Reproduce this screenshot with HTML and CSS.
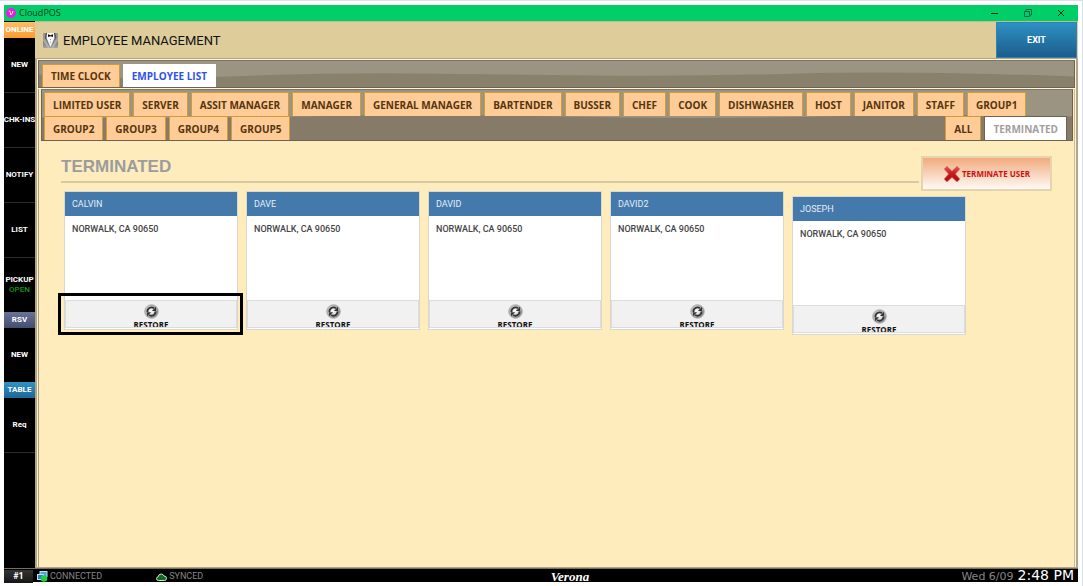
FILE: index.html
```html
<!DOCTYPE html>
<html lang="en">
<head>
  <meta charset="UTF-8">
  <meta name="viewport" content="width=device-width, initial-scale=1.0">
  <title>CloudPOS</title>
  <link rel="stylesheet" href="styles.css">
</head>
<body>
<svg width="0" height="0" class="defs">
  <defs>
    <radialGradient id="metal" cx="45%" cy="45%">
      <stop offset="0" stop-color="#ffffff"/>
      <stop offset="0.5" stop-color="#dddddd"/>
      <stop offset="1" stop-color="#8c8c8c"/>
    </radialGradient>
    <linearGradient id="cross" x1="0" y1="0" x2="0" y2="1">
      <stop offset="0" stop-color="#e85a5a"/>
      <stop offset="0.5" stop-color="#c41a1a"/>
      <stop offset="1" stop-color="#b80c0c"/>
    </linearGradient>
    <linearGradient id="suit" x1="0" y1="0" x2="0" y2="1">
      <stop offset="0" stop-color="#3c3c3c"/>
      <stop offset="1" stop-color="#a4a4a4"/>
    </linearGradient>
    <symbol id="restore" viewBox="0 0 16 16">
      <circle cx="8" cy="8" r="7.3" fill="url(#metal)" stroke="#b4b4b4"/>
      <path d="M3.7 8.6A4.3 4.3 0 0 1 10.6 4.6" fill="none" stroke="#333" stroke-width="2"/>
      <path d="M12.8 3V7.4H8.4Z" fill="#333"/>
      <path d="M12.3 7.9A4.3 4.3 0 0 1 5.4 11.6" fill="none" stroke="#333" stroke-width="2"/>
      <path d="M3.2 13V8.8H7.6Z" fill="#333"/>
    </symbol>
  </defs>
</svg>

<div class="window">
  <header class="titlebar">
    <svg class="app-icon" viewBox="0 0 10 10">
      <circle cx="5" cy="5" r="5" fill="#f01ae0"/>
      <path d="M2.8 3Q4 2.4 4.4 4.6L4.7 7Q6.6 5.5 7 3" fill="none" stroke="#fff" stroke-width="0.9"/>
    </svg>
    <span class="app-name">CloudPOS</span>
    <button class="win-btn" aria-label="Minimize"><svg viewBox="0 0 8 8"><path d="M0 4.5H7" stroke="#021" stroke-width="1"/></svg></button>
    <button class="win-btn" aria-label="Restore down"><svg viewBox="0 0 8 8"><path d="M0.5 2.5H5.5V7.5H0.5ZM2 1.5V0.5H7.5V6H6" fill="none" stroke="#064"/></svg></button>
    <button class="win-btn" aria-label="Close"><svg viewBox="0 0 8 8"><path d="M1 1L7 7M7 1L1 7" stroke="#021" stroke-width="0.9"/></svg></button>
  </header>

  <div class="content">
    <nav class="sidebar">
      <button class="side-label online">ONLINE</button>
      <button class="side-btn">NEW</button>
      <button class="side-btn">CHK-INS</button>
      <button class="side-btn">NOTIFY</button>
      <button class="side-btn">LIST</button>
      <button class="side-btn pickup">PICKUP<span class="open">OPEN</span></button>
      <button class="side-label rsv">RSV</button>
      <button class="side-btn last">NEW</button>
      <button class="side-label table">TABLE</button>
      <button class="side-btn">Req</button>
    </nav>

    <main class="main">
      <div class="page-header">
        <svg class="suit-icon" viewBox="0 0 15 15">
          <rect width="15" height="15" rx="1" fill="url(#suit)"/>
          <path d="M0 0H3L1.5 5 3 7 6.5 15H5L0 8Z" fill="#c9c9c9" opacity="0.6"/>
          <path d="M15 0H12L13.5 5 12 7 8.5 15H10L15 8Z" fill="#c9c9c9" opacity="0.6"/>
          <path d="M4 0H11L11.5 5 7.5 14 3.5 5Z" fill="#f7f7f7"/>
          <path d="M5 1.2L7.5 2.2 10 1.2V4L7.5 3.2 5 4Z" fill="#111"/>
          <circle cx="7.5" cy="6.5" r="0.5" fill="#777"/>
          <circle cx="7.5" cy="9" r="0.5" fill="#777"/>
        </svg>
        <h1>EMPLOYEE MANAGEMENT</h1>
        <button class="exit-btn">EXIT</button>
      </div>

      <div class="frame">
        <div class="tabbar">
          <svg class="wave" viewBox="0 0 1036 27" preserveAspectRatio="none"><path d="M0 14Q90 20 190 16T380 13T560 15T760 13T1036 16V27H0Z" fill="#8a816d"/></svg>
          <button class="tab">TIME CLOCK</button>
          <button class="tab active">EMPLOYEE LIST</button>
        </div>

        <div class="panel">
          <div class="tabbar groups">
            <svg class="wave" viewBox="0 0 1030 51" preserveAspectRatio="none"><path d="M0 28Q130 30 260 27T520 27T780 27T1030 27V51H0Z" fill="#867b69"/></svg>
            <button class="tab">LIMITED USER</button>
            <button class="tab">SERVER</button>
            <button class="tab">ASSIT MANAGER</button>
            <button class="tab">MANAGER</button>
            <button class="tab">GENERAL MANAGER</button>
            <button class="tab">BARTENDER</button>
            <button class="tab">BUSSER</button>
            <button class="tab">CHEF</button>
            <button class="tab">COOK</button>
            <button class="tab">DISHWASHER</button>
            <button class="tab">HOST</button>
            <button class="tab">JANITOR</button>
            <button class="tab">STAFF</button>
            <button class="tab">GROUP1</button>
            <button class="tab">GROUP2</button>
            <button class="tab">GROUP3</button>
            <button class="tab">GROUP4</button>
            <button class="tab">GROUP5</button>
            <button class="tab all">ALL</button>
            <button class="tab selected">TERMINATED</button>
          </div>

          <div class="section-head">
            <h2>TERMINATED</h2>
            <button class="terminate-btn">
              <svg viewBox="0 0 18 18"><path d="M4 1L9 6 14 1 17 4 12.5 9 17 14 14 17 9 12.5 4 17 1 14 5.5 9 1 4Z" fill="url(#cross)" stroke="#d88" stroke-width="0.5"/></svg>
              <span>TERMINATE USER</span>
            </button>
          </div>

          <div class="cards">
            <article class="card">
              <h3>CALVIN</h3>
              <p>NORWALK, CA 90650</p>
              <div class="card-foot highlight">
                <button class="restore-btn"><svg><use href="#restore"/></svg>RESTORE</button>
              </div>
            </article>
            <article class="card">
              <h3>DAVE</h3>
              <p>NORWALK, CA 90650</p>
              <div class="card-foot">
                <button class="restore-btn"><svg><use href="#restore"/></svg>RESTORE</button>
              </div>
            </article>
            <article class="card">
              <h3>DAVID</h3>
              <p>NORWALK, CA 90650</p>
              <div class="card-foot">
                <button class="restore-btn"><svg><use href="#restore"/></svg>RESTORE</button>
              </div>
            </article>
            <article class="card">
              <h3>DAVID2</h3>
              <p>NORWALK, CA 90650</p>
              <div class="card-foot">
                <button class="restore-btn"><svg><use href="#restore"/></svg>RESTORE</button>
              </div>
            </article>
            <article class="card lowered">
              <h3>JOSEPH</h3>
              <p>NORWALK, CA 90650</p>
              <div class="card-foot">
                <button class="restore-btn"><svg><use href="#restore"/></svg>RESTORE</button>
              </div>
            </article>
          </div>
        </div>
      </div>
    </main>
  </div>

  <footer class="statusbar">
    <div class="status-left">
      <span class="station">#1</span>
      <span class="status connected">
        <svg viewBox="0 0 11 11"><rect x="3" y="0.5" width="7" height="5" fill="#4aa3e8" stroke="#cde"/><rect x="0.5" y="3.5" width="6" height="5" fill="#2c7fd0" stroke="#cde"/><circle cx="7" cy="7.5" r="3.3" fill="#12d83c"/></svg>
        CONNECTED
      </span>
      <span class="status">
        <svg viewBox="0 0 11 11"><path d="M2.5 9.5Q0.5 9.5 0.5 7.6 0.5 6 2.2 5.8 2.6 3 5.2 3 7.3 3 8 5 10.5 5 10.5 7.3 10.5 9.5 8.5 9.5Z" fill="#0d6b22" stroke="#cde8cd"/></svg>
        SYNCED
      </span>
    </div>
    <span class="brand">Verona</span>
    <div class="clock"><span class="date">Wed 6/09</span><span class="time">2:48 PM</span></div>
  </footer>
</div>
</body>
</html>
```
FILE: styles.css
```css
* {
  box-sizing: border-box;
}
body {
  margin: 0;
  height: 100vh;
  padding: 4px;
  border-top: 1px solid #dde1e6;
  border-right: 1px solid #dde1e6;
  background: #fff;
  font-family: "Liberation Sans", Arial, sans-serif;
}
button {
  font: inherit;
  margin: 0;
  padding: 0;
  border: none;
  background: none;
  cursor: pointer;
}
h1, h2, h3, p {
  margin: 0;
}
.defs {
  position: absolute;
}
.window {
  height: 100%;
  display: flex;
  flex-direction: column;
  background: #000;
}

/* title bar */
.titlebar {
  flex: none;
  height: 16px;
  display: flex;
  align-items: center;
  background: #00cf68;
}
.app-icon {
  width: 10px;
  height: 10px;
  margin: 0 3px 0 2px;
}
.app-name {
  flex: 1;
  font: 9px/14px "Open Sans", sans-serif;
  color: #053a1e;
}
.win-btn {
  width: 33px;
  height: 16px;
  display: flex;
  align-items: center;
  justify-content: center;
}
.win-btn svg {
  width: 8px;
  height: 8px;
}
.win-btn:last-child {
  margin-right: 1px;
}

.content {
  flex: 1;
  min-height: 0;
  display: flex;
}

/* left navigation */
.sidebar {
  flex: none;
  width: 31px;
  padding-top: 1px;
  display: flex;
  flex-direction: column;
  color: #fff;
  font: bold 8px/10px Roboto, sans-serif;
}
.sidebar button {
  color: #fff;
  text-align: center;
  white-space: nowrap;
}
.side-label {
  height: 16px;
}
.side-btn {
  height: 55px;
  display: flex;
  flex-direction: column;
  align-items: center;
  justify-content: center;
  border-bottom: 1px solid #2b2b2b;
}
.side-btn.pickup,
.side-btn.last {
  height: 54px;
  border-bottom-color: #000;
}
.online {
  background: linear-gradient(#ffbd6b, #fb9c2d);
}
.rsv {
  background: linear-gradient(#6a7396, #434d72);
}
.table {
  background: linear-gradient(#2f93c6, #1d6797);
}
.open {
  color: #0a9a12;
  font-weight: 500;
}

/* page */
.main {
  flex: 1;
  min-width: 0;
  display: flex;
  flex-direction: column;
  background: #feecbd;
}
.page-header {
  flex: none;
  height: 37px;
  display: flex;
  align-items: center;
  padding-left: 8px;
  background: #decd9b;
  border-top: 1px solid #c4b88c;
}
.suit-icon {
  width: 15px;
  height: 15px;
  margin-right: 5px;
}
h1 {
  flex: 1;
  font: 13px Roboto, sans-serif;
  color: #111;
}
.exit-btn {
  width: 81px;
  height: 36px;
  margin-right: 1px;
  border: 1px solid #2f84b4;
  background: linear-gradient(#2e90c4, #1c5d8c);
  color: #fff;
  font: bold 9px Roboto, sans-serif;
}
.frame {
  flex: 1;
  display: flex;
  flex-direction: column;
  border: 1px solid #b3a486;
  border-left-width: 2px;
  border-right-width: 2px;
  padding: 1px 1px 0;
  background: #fff6d8;
}
.tabbar {
  flex: none;
  position: relative;
  display: flex;
  align-items: flex-end;
  gap: 3px;
  height: 28px;
  padding: 0 3px;
  background: #9c9483;
  border: 1px solid #6c6352;
  border-top-color: #7d7564;
}
.wave {
  position: absolute;
  left: 0;
  top: 0;
  width: 100%;
  height: 100%;
}
.tab {
  position: relative;
  height: 23px;
  padding: 0 8px;
  border: 1px solid #d29b3a;
  border-bottom: none;
  background: #ffcb97;
  color: #54360d;
  font: bold 10px "Open Sans", sans-serif;
  white-space: nowrap;
}
.tab.active {
  background: #fff;
  border-color: #fff;
  color: #2f50f0;
}
.panel {
  flex: 1;
  margin-top: 1px;
  border-left: 1px solid #a99b7d;
  border-right: 1px solid #c9bb97;
  padding: 0 1px 0 2px;
  background: #feecbd;
}
.groups {
  height: auto;
  flex-wrap: wrap;
  gap: 0 3px;
  padding: 2px 5px 0 2px;
}
.groups .tab {
  height: 24px;
}
.groups .all {
  margin-left: auto;
}
.groups .selected {
  background: #fff;
  border-color: #6c6352;
  color: #a0a0a0;
}

.section-head {
  display: flex;
  align-items: flex-start;
  gap: 2px;
  padding: 15px 21px 0 20px;
}
h2 {
  flex: 1;
  height: 27px;
  border-bottom: 2px solid #d5c9a6;
  color: #9c9c9c;
  font-size: 17px;
  line-height: 22px;
}
.terminate-btn {
  width: 131px;
  height: 35px;
  display: flex;
  align-items: center;
  justify-content: center;
  gap: 1px;
  border: 2px solid #e6d3b0;
  background: linear-gradient(#f0ab7d, #fffaf6);
  color: #d01010;
  font: bold 8px "Open Sans", sans-serif;
  white-space: nowrap;
}
.terminate-btn svg {
  width: 18px;
  height: 18px;
}

/* employee cards */
.cards {
  display: flex;
  flex-wrap: wrap;
  align-items: flex-start;
  gap: 8px;
  padding: 0 23px;
}
.card {
  width: 174px;
  border: 1px solid #dad7ce;
  background: #fff;
}
.card.lowered {
  margin-top: 5px;
}
.card h3 {
  height: 24px;
  padding: 0 7px;
  background: #4479ac;
  color: #e6edf4;
  font: 9px/24px Roboto, sans-serif;
}
.card p {
  height: 84px;
  padding: 7px 7px;
  color: #444;
  font: 500 9px/12px Roboto, sans-serif;
}
.card-foot {
  position: relative;
  height: 29px;
}
.restore-btn {
  width: 100%;
  height: 28px;
  display: flex;
  flex-direction: column;
  align-items: center;
  overflow: hidden;
  padding-top: 3px;
  border: 1px solid #dcdcdc;
  background: #f1f1f1;
  color: #111;
  font: bold 8px/11px "Open Sans", sans-serif;
}
.restore-btn svg {
  flex: none;
  width: 15px;
  height: 15px;
}
.highlight::after {
  content: "";
  position: absolute;
  inset: -7px -6px -6px -7px;
  border: 3px solid #000;
  pointer-events: none;
}

/* status bar */
.statusbar {
  flex: none;
  height: 14px;
  display: grid;
  grid-template-columns: 1fr auto 1fr;
  align-items: center;
  border-top: 1px solid #77705f;
  background: #000;
  color: #858585;
  font: 9px/13px Roboto, sans-serif;
}
.status-left {
  display: flex;
}
.station {
  width: 29px;
  background: linear-gradient(#333, #161616);
  color: #fff;
  font-weight: bold;
  text-align: center;
}
.status {
  display: flex;
  align-items: center;
  gap: 2px;
}
.connected {
  margin: 0 54px 0 4px;
}
.status svg {
  width: 11px;
  height: 11px;
}
.brand {
  padding-left: 58px;
  color: #fff;
  font: italic bold 13px/13px "Liberation Serif", serif;
}
.clock {
  display: flex;
  justify-content: flex-end;
  align-items: baseline;
  gap: 4px;
  padding-right: 4px;
  font-family: "DejaVu Sans", sans-serif;
  white-space: nowrap;
}
.date {
  font-size: 11px;
}
.time {
  color: #fff;
  font-size: 14px;
}
```
